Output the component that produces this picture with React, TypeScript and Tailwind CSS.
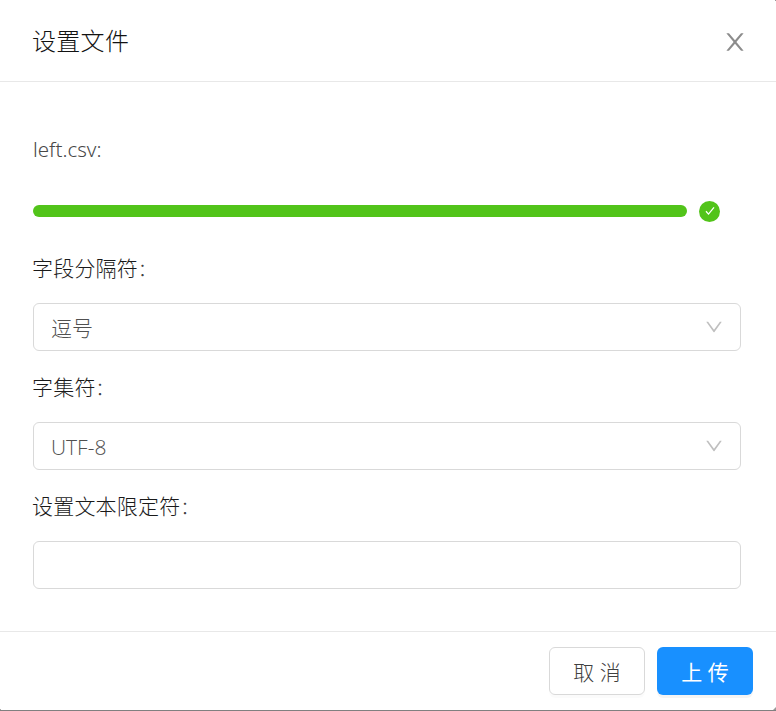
const Chevron = () => (
  <svg viewBox="64 64 896 896" className="h-[18px] w-[18px] shrink-0 fill-[#bfbfbf]" aria-hidden="true">
    <path d="M884 256h-75c-5.1 0-9.900 2.500-12.900 6.600L512 654.200 227.900 262.600c-3-4.100-7.800-6.600-12.900-6.600h-75c-6.500 0-10.300 7.400-6.500 12.700l352.600 486.100c12.800 17.600 39 17.600 51.700 0l352.600-486.100c3.900-5.300.1-12.700-6.400-12.700z" />
  </svg>
);

function SelectBox({ value }: { value: string }) {
  return (
    <button className="flex h-12 w-full items-center justify-between rounded-[6px] border border-[#d9d9d9] bg-white px-[17px] text-left text-[21px] text-[#505050]">
      <span className="pt-[3px]">{value}</span>
      <Chevron />
    </button>
  );
}

const Label = ({ children }: { children: string }) => (
  <div className="flex h-[71px] items-center pt-[3px] text-[21px] text-[#1a1a1a]">
    <span className="-ml-px tracking-[0.2px]">{children}</span>
    <span className="text-[18px] text-[#404040]">：</span>
  </div>
);

export default function App() {
  return (
    <div className="relative flex h-[711px] w-[776px] flex-col overflow-hidden border-b border-[#808080] bg-white font-['Open_Sans','Noto_Sans_CJK_SC',sans-serif] font-light">
      <header className="flex h-[82px] shrink-0 items-center justify-between border-b border-[#e8e8e8] pr-[29px] pl-[33px]">
        <h1 className="-ml-px text-[24px] tracking-[0.3px] text-[#121212]">设置文件</h1>
        <button aria-label="Close" className="pt-[2px]">
          <svg viewBox="64 64 896 896" className="h-6 w-6 fill-[#8c8c8c]">
            <path d="M563.800 512l262.500-312.900c4.400-5.200.7-13.100-6.100-13.100h-79.800c-4.700 0-9.200 2.100-12.300 5.700L511.600 449.800 295.100 191.700c-3-3.600-7.500-5.700-12.300-5.700H203c-6.800 0-10.500 7.900-6.100 13.100L459.400 512 196.900 824.900A7.950 7.950 0 0 0 203 838h79.800c4.700 0 9.200-2.100 12.300-5.700l216.500-258.100 216.500 258.100c3 3.600 7.500 5.700 12.300 5.700h79.800c6.800 0 10.500-7.900 6.100-13.100L563.800 512z" />
          </svg>
        </button>
      </header>
      <main className="flex-1 pt-[50px] pr-[35px] pl-[33px]">
        <div className="flex h-9 items-center pb-[2px] font-['Noto_Sans',sans-serif] text-[20.5px] text-[#484848]">left.csv:</div>
        <div className="mt-[32px] flex h-[22px] items-center gap-3">
          <div className="h-3 w-[654px] rounded-full bg-[#52c41a]" />
          <div className="flex h-[21px] w-[21px] items-center justify-center rounded-full bg-[#52c41a]">
            <svg viewBox="0 0 12 12" className="h-3 w-3 fill-none stroke-white stroke-[1.3]"><path d="M2 6.300l2.500 2.800L10 2.400" /></svg>
          </div>
        </div>
        <div className="mt-[10px]">
          <Label>字段分隔符</Label>
          <SelectBox value="逗号" />
          <Label>字集符</Label>
          <SelectBox value="UTF-8" />
          <Label>设置文本限定符</Label>
          <input aria-label="设置文本限定符" className="block h-12 w-full rounded-[6px] border border-[#d9d9d9] px-4 text-[21px]" />
        </div>
      </main>
      <footer className="flex h-[79px] shrink-0 items-start justify-end gap-3 border-t border-[#e8e8e8] pt-[15px] pr-[23px] text-[21px]">
        <button className="h-12 w-24 rounded-[6px] border border-[#d9d9d9] pt-[3px] text-[#404040] shadow-[0_3px_0_rgba(0,0,0,0.016)]">取 消</button>
        <button className="h-12 w-24 rounded-[6px] bg-[#1890ff] pt-[3px] font-normal text-white shadow-[0_3px_0_rgba(0,0,0,0.045)]">上 传</button>
      </footer>
      <span className="absolute top-0 right-0 h-px w-px bg-[#999]" />
      <span className="absolute bottom-0 left-0 h-px w-px bg-[#aaa]" />
      <svg viewBox="0 0 3 3" className="absolute right-0 bottom-0 h-[3px] w-[3px] fill-[#999]" aria-hidden="true"><path d="M3 0v3H0z" /></svg>
    </div>
  );
}
